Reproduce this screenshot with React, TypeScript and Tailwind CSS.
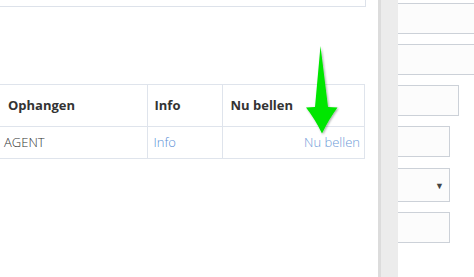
import React from "react";

const font = { fontFamily: '"Open Sans", "Liberation Sans", sans-serif' };

function GreenArrow() {
  return (
    <svg
      className="absolute left-[300px] top-[40px]"
      width="45"
      height="100"
      viewBox="0 0 45 100"
    >
      <defs>
        <filter id="sh" x="-30%" y="-30%" width="160%" height="160%">
          <feDropShadow dx="1" dy="1" stdDeviation="1" floodColor="#000" floodOpacity="0.35" />
        </filter>
      </defs>
      <path
        d="M20.5 6 L15 67 L6 67.5 Q15 79 22 93.5 Q29 79 37.5 67.5 L28 67 Z"
        fill="#00e600"
        filter="url(#sh)"
      />
    </svg>
  );
}

export default function App() {
  return (
    <div className="relative flex h-[277px] w-[474px] overflow-hidden bg-white" style={font}>
      {/* main content */}
      <div className="w-[378px] shrink-0">
        <div className="h-[7px] w-[366px] border-b border-r border-[#dde2ea]" />

        <table className="mt-[77px] w-[365px] border-collapse text-[#333]">
          <thead>
            <tr className="h-[42px] border-y border-[#dfe4ec]">
              <th className="w-[147px] pl-[8px] text-left text-[13px] font-bold">Ophangen</th>
              <th className="w-[75px] border-x border-[#dfe4ec] pl-[7px] text-left text-[13px] font-bold">
                Info
              </th>
              <th className="border-r border-[#dfe4ec] pl-[8px] text-left text-[13px] font-bold">
                Nu bellen
              </th>
            </tr>
          </thead>
          <tbody>
            <tr className="h-[32px] border-b border-[#dfe4ec]">
              <td className="pl-[4px] text-[13px] font-light">AGENT</td>
              <td className="border-x border-[#dfe4ec] pl-[6px] text-[13px] font-light text-[#5b8fd6]">
                Info
              </td>
              <td className="border-r border-[#dfe4ec] pr-[4px] text-right text-[13px] font-light text-[#6c9ad8]">
                Nu bellen
              </td>
            </tr>
          </tbody>
        </table>
      </div>

      {/* grey separator */}
      <div className="flex w-[20px] shrink-0">
        <div className="w-[3px] bg-[#dcdcdc]" />
        <div className="flex-1 bg-[#ececec]" />
      </div>

      {/* right form column */}
      <div className="flex flex-1 flex-col overflow-hidden pt-[3px]">
        <div className="-ml-[10px] h-[31px] w-[100px] border border-[#ccd1d8] bg-[#fcfcfc]" />
        <div className="-ml-[10px] mt-[10px] h-[31px] w-[100px] border border-[#ccd1d8] bg-[#fcfcfc]" />
        <div className="-ml-[10px] mt-[10px] h-[31px] w-[71px] border border-[#ccd1d8] bg-[#fcfcfc]" />
        <div className="-ml-[10px] mt-[10px] h-[31px] w-[62px] border border-[#ccd1d8] bg-[#fcfcfc]" />
        <div className="-ml-[10px] mt-[11px] flex h-[34px] w-[62px] items-center justify-end border border-[#ccd1d8] bg-[#fcfcfc] pr-[5px]">
          <span className="text-[9px] leading-none text-[#444]">▼</span>
        </div>
        <div className="-ml-[10px] mt-[10px] h-[31px] w-[62px] border border-[#ccd1d8] bg-[#fcfcfc]" />
      </div>

      <GreenArrow />
    </div>
  );
}
